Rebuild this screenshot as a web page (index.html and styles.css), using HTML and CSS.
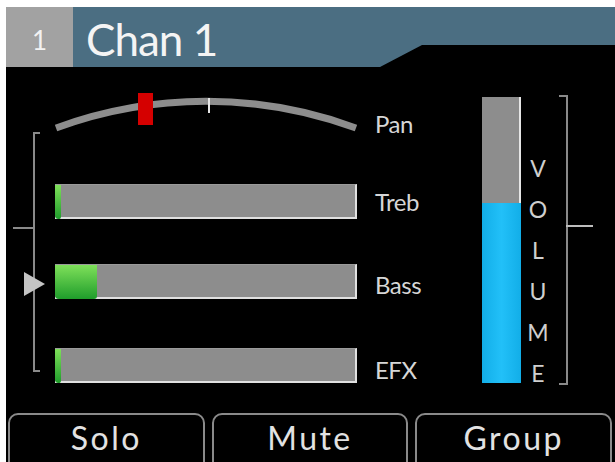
FILE: index.html
```html
<!DOCTYPE html>
<html lang="en">
<head>
<meta charset="utf-8">
<title>Chan 1</title>
<link rel="stylesheet" href="styles.css">
</head>
<body>
<div class="screen">
  <header class="head">
    <div class="num">1</div>
    <div class="title">Chan 1</div>
  </header>

  <main class="body">
    <section class="mix">
      <div class="bracket-left"></div>
      <div class="controls">
        <div class="row row-pan">
          <svg class="pan" width="302" height="45" viewBox="0 0 302 45">
            <path d="M1 38 A434 434 0 0 1 301 38" fill="none" stroke="#8d8d8d" stroke-width="7"/>
            <rect x="153" y="8" width="2" height="15" fill="#e6e6e6"/>
            <rect x="83" y="3" width="15" height="32" fill="#d50000"/>
          </svg>
          <span class="label label-pan">Pan</span>
        </div>
        <div class="row row-wide">
          <div class="bar"><div class="fill" style="width:6px"></div></div>
          <span class="label label-treb">Treb</span>
        </div>
        <div class="row">
          <div class="bar"><div class="fill" style="width:42px"></div></div>
          <span class="label label-bass">Bass</span>
        </div>
        <div class="row row-wide">
          <div class="bar"><div class="fill" style="width:6px"></div></div>
          <span class="label label-efx">EFX</span>
        </div>
      </div>
    </section>

    <section class="vol">
      <div class="vol-bar">
        <div class="vol-level" style="height:63%"></div>
      </div>
      <div class="vol-word">
        <span>V</span><span>O</span><span>L</span><span>U</span><span>M</span><span>E</span>
      </div>
      <div class="bracket-right"></div>
    </section>
  </main>

  <footer class="buttons">
    <button class="btn">Solo</button>
    <button class="btn">Mute</button>
    <button class="btn">Group</button>
  </footer>
</div>
</body>
</html>
```

FILE: styles.css
```css
* {
  box-sizing: border-box;
}

body {
  margin: 0;
  background: #ffffff;
  font-family: "Lato", "Open Sans", sans-serif;
  overflow: hidden;
}

.screen {
  margin: 7px 0 0 6px;
  width: 609px;
  height: 455px;
  background: #000;
  overflow: hidden;
  display: flex;
  flex-direction: column;
}

/* ---------- header ---------- */
.head {
  display: flex;
  height: 60px;
  flex: none;
}

.num {
  width: 67px;
  background: #a2a2a2;
  color: #f2f2f2;
  font-size: 26px;
  display: flex;
  align-items: center;
  justify-content: center;
  padding-top: 6px;
}

.title {
  flex: 1;
  background: #4b6e82;
  color: #f4f4f4;
  font-size: 44px;
  line-height: 64px;
  padding-left: 13px;
  letter-spacing: -1px;
  /* notch cut into the lower right of the title bar */
  clip-path: polygon(0 0, 100% 0, 100% 38px, 349px 38px, 307px 60px, 0 60px);
}

/* ---------- main ---------- */
.body {
  height: 346px;
  display: flex;
  flex: none;
}

.mix {
  width: 476px;
  display: flex;
  align-items: flex-start;
}

.bracket-left {
  position: relative;
  margin: 65px 0 0 27px;
  width: 7px;
  height: 240px;
  border-left: 2px solid #8a8a8a;
  border-top: 2px solid #8a8a8a;
  border-bottom: 2px solid #8a8a8a;
}

.bracket-left::before {
  content: "";
  position: absolute;
  left: -22px;
  top: 93px;
  width: 20px;
  height: 2px;
  background: #8a8a8a;
}

.bracket-left::after {
  content: "";
  position: absolute;
  left: -11px;
  top: 138px;
  border-style: solid;
  border-width: 12px 0 12px 21px;
  border-color: transparent transparent transparent #c4c4c4;
}

.controls {
  margin: 23px 0 0 15px;
  display: flex;
  flex-direction: column;
  gap: 45px;
}

.row {
  display: flex;
  align-items: center;
  gap: 18px;
  height: 35px;
}

.row-wide {
  margin-top: 4px;
}

.row-pan {
  height: 45px;
  align-items: flex-start;
}

.pan {
  display: block;
}

.label {
  color: #d6d6d6;
  font-size: 24px;
  line-height: 1;
  letter-spacing: -0.5px;
}

.label-pan {
  padding-top: 22px;
}

.label-treb {
  padding-top: 1px;
}

.label-bass {
  padding-top: 7px;
}

.label-efx {
  padding-top: 9px;
}

.bar {
  width: 302px;
  height: 35px;
  background: #8d8d8d;
  border-right: 2px solid #e0e0e0;
  border-bottom: 2px solid #e0e0e0;
  border-top: 1px solid #9a9a9a;
  display: flex;
}

.fill {
  height: calc(100% + 2px);
  background: linear-gradient(#7fe05a, #1f9d2b);
  border-radius: 0 0 3px 4px;
}

/* ---------- volume ---------- */
.vol {
  display: flex;
  align-items: flex-start;
}

.vol-bar {
  margin-top: 30px;
  width: 39px;
  height: 286px;
  background: #8d8d8d;
  border-right: 2px solid #e6e6e6;
  display: flex;
  flex-direction: column;
  justify-content: flex-end;
}

.vol-level {
  margin-right: -2px;
  background: linear-gradient(90deg, #12aee8, #22c0f8 50%, #12aee8);
}

.vol-word {
  margin: 81px 0 0 9px;
  width: 16px;
  display: flex;
  flex-direction: column;
  align-items: center;
  color: #cfcfcf;
  font-size: 23px;
  line-height: 41px;
}

.bracket-right {
  position: relative;
  margin: 28px 0 0 13px;
  width: 9px;
  height: 290px;
  border-right: 2px solid #8a8a8a;
  border-top: 2px solid #8a8a8a;
  border-bottom: 2px solid #8a8a8a;
}

.bracket-right::after {
  content: "";
  position: absolute;
  left: 7px;
  top: 128px;
  width: 27px;
  height: 2px;
  background: #bdbdbd;
}

/* ---------- buttons ---------- */
.buttons {
  display: grid;
  grid-template-columns: repeat(3, 1fr);
  gap: 7px;
  padding: 0 3px 0 2px;
}

.btn {
  height: 62px;
  background: #000;
  border: 2px solid #8a8a8a;
  border-radius: 10px;
  color: #e2e2e2;
  font-family: "Lato", "Open Sans", sans-serif;
  font-size: 32px;
  letter-spacing: 2.5px;
  padding: 0 0 14px;
  text-align: center;
}
```
